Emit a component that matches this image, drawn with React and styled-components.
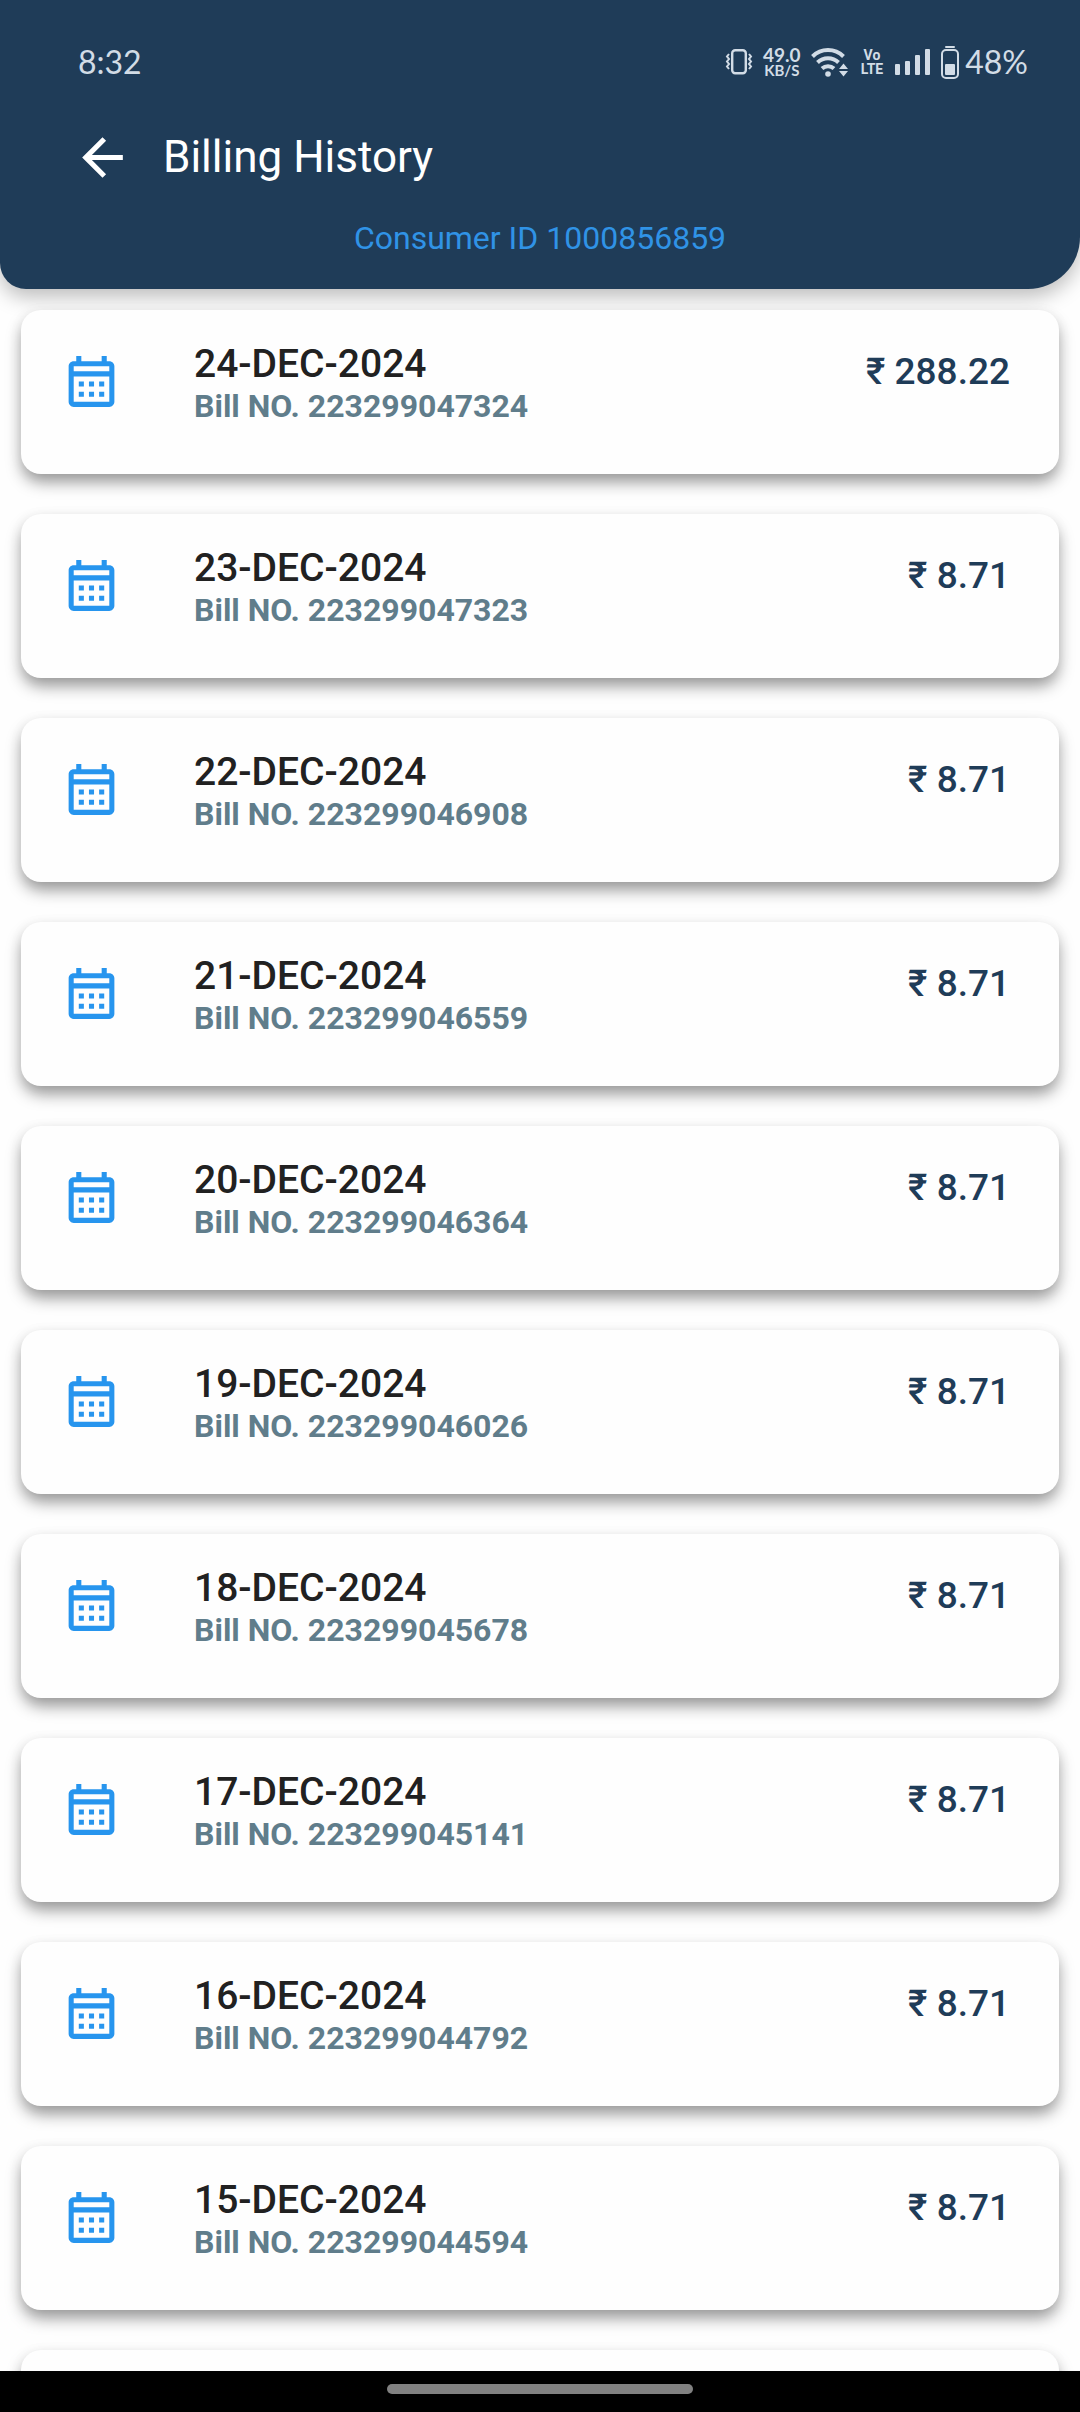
import React from "react";
import styled, { createGlobalStyle } from "styled-components";

const GlobalStyle = createGlobalStyle`
  * { box-sizing: border-box; }
  body { margin: 0; background: #fefefe; font-family: Roboto, "Noto Sans", sans-serif; }
`;

const Screen = styled.div`
  display: flex;
  flex-direction: column;
  height: 100vh;
  overflow: hidden;
`;

const Header = styled.header`
  flex: none;
  padding-bottom: 33px;
  background: #1f3c58;
  border-radius: 0 0 52px 26px;
  box-shadow: 0 8px 20px rgba(0, 0, 0, 0.26);
`;

const StatusBar = styled.div`
  display: flex;
  align-items: center;
  justify-content: space-between;
  height: 124px;
  padding: 0 52px 0 78px;
  color: #d2dce6;
  font-family: Lato, sans-serif;
  font-size: 32px;
  line-height: 40px;
`;

const StatusIcons = styled.div`
  display: flex;
  align-items: center;
`;

const Glyph = styled.svg`
  display: block;
  flex: none;
  margin-right: ${(p) => p.$gap}px;
`;

const Speed = styled.div`
  margin-right: 10px;
  font-size: 19px;
  font-weight: 700;
  line-height: 17px;
  text-align: center;
`;

const Unit = styled.div`
  font-size: 15px;
  line-height: 15px;
`;

const Volte = styled.div`
  margin-right: 12px;
  font-family: "Liberation Sans Narrow", Roboto, sans-serif;
  font-size: 14px;
  font-weight: 700;
  line-height: 14px;
  text-align: center;
`;

const TitleRow = styled.div`
  display: flex;
  align-items: center;
  height: 66px;
  padding-left: 72px;
`;

const BackButton = styled.button`
  display: flex;
  margin: 0 30px 0 0;
  padding: 0;
  border: 0;
  background: none;
  color: #fff;
`;

const Title = styled.h1`
  margin: 0;
  color: #fff;
  font-size: 44px;
  font-weight: 400;
  line-height: 52px;
`;

const Consumer = styled.p`
  margin: 30px 0 0;
  color: #3093e6;
  font-size: 32px;
  line-height: 36px;
  text-align: center;
`;

const BillList = styled.ul`
  display: flex;
  flex: 1;
  flex-direction: column;
  gap: 40px;
  min-height: 0;
  margin: 0;
  padding: 21px 21px 0;
  overflow: hidden;
  list-style: none;
`;

const Card = styled.li`
  display: flex;
  flex: none;
  align-items: flex-start;
  min-height: 164px;
  padding: 31px 49px 40px 40px;
  border-radius: 20px;
  background: #fefefe;
  box-shadow: 0 9px 16px -1px rgba(0, 0, 0, 0.4), 0 2px 16px rgba(0, 0, 0, 0.04);
`;

const CalendarIcon = styled.svg`
  flex: none;
  margin: 10px 72px 0 0;
  color: #2795ee;
`;

const Details = styled.div`
  flex: 1;
`;

const BillDate = styled.div`
  color: #212121;
  font-size: 39px;
  font-weight: 500;
  line-height: 46px;
`;

const BillNumber = styled.div`
  color: #607d8b;
  font-size: 32px;
  font-weight: 700;
  line-height: 38px;
`;

const Amount = styled.div`
  margin-top: 10px;
  color: #1f3c58;
  font-size: 37px;
  font-weight: 500;
  line-height: 42px;
`;

const NavBar = styled.div`
  display: flex;
  flex: none;
  justify-content: center;
  height: 41px;
  padding-top: 13px;
  background: #000;
  z-index: 1;
`;

const HomeHandle = styled.div`
  width: 306px;
  height: 10px;
  border-radius: 5px;
  background: #818181;
`;

const bills = [
  ["24-DEC-2024", "223299047324", "288.22"],
  ["23-DEC-2024", "223299047323", "8.71"],
  ["22-DEC-2024", "223299046908", "8.71"],
  ["21-DEC-2024", "223299046559", "8.71"],
  ["20-DEC-2024", "223299046364", "8.71"],
  ["19-DEC-2024", "223299046026", "8.71"],
  ["18-DEC-2024", "223299045678", "8.71"],
  ["17-DEC-2024", "223299045141", "8.71"],
  ["16-DEC-2024", "223299044792", "8.71"],
  ["15-DEC-2024", "223299044594", "8.71"],
];

function Calendar() {
  return (
    <CalendarIcon width="61" height="61" viewBox="0 0 24 24" fill="currentColor" aria-hidden="true">
      <path d="M19 4h-1V2h-2v2H8V2H6v2H5c-1.11 0-1.99.9-1.99 2L3 20c0 1.1.89 2 2 2h14c1.1 0 2-.9 2-2V6c0-1.1-.9-2-2-2zm0 16H5V10h14v10zm0-12H5V6h14v2zM9 14H7v-2h2v2zm4 0h-2v-2h2v2zm4 0h-2v-2h2v2zm-8 4H7v-2h2v2zm4 0h-2v-2h2v2zm4 0h-2v-2h2v2z" />
    </CalendarIcon>
  );
}

function Status() {
  return (
    <StatusBar>
      <span>8:32</span>
      <StatusIcons>
        <Glyph $gap={10} width="28" height="26" viewBox="0 0 28 26" fill="none" stroke="currentColor">
          <rect x="7.2" y="1.2" width="13.6" height="23" rx="3" strokeWidth="2.4" />
          <path d="M4 5l-2 2.500 2 2.500-2 2.500 2 2.500-2 2.500 2 2.500M24 5l2 2.500-2 2.500 2 2.500-2 2.500 2 2.500-2 2.500" strokeWidth="2" />
        </Glyph>
        <Speed>
          49.0
          <Unit>KB/S</Unit>
        </Speed>
        <Glyph $gap={12} width="38" height="30" viewBox="0 0 38 30" fill="none" stroke="currentColor">
          <path d="M1.500 9.500a22 22 0 0 1 31 0M6.500 15.500a15 15 0 0 1 21 0M11 21.500a9 9 0 0 1 12 0" strokeWidth="4" />
          <circle cx="17" cy="27" r="2.800" fill="currentColor" stroke="none" />
          <path d="M28 22l4.500-5.500 4.500 5.500zM28 24h9l-4.500 5.500z" fill="currentColor" stroke="none" />
        </Glyph>
        <Volte>
          Vo
          <div>LTE</div>
        </Volte>
        <Glyph $gap={10} width="36" height="26" viewBox="0 0 36 26" fill="currentColor">
          <rect x="0" y="15" width="5" height="11" rx="1" />
          <rect x="10" y="12" width="5" height="14" rx="1" />
          <rect x="20" y="6" width="5" height="20" rx="1" />
          <rect x="30" y="0" width="5" height="26" rx="1" />
        </Glyph>
        <Glyph $gap={6} width="18" height="33" viewBox="0 0 18 33" fill="currentColor">
          <rect x="4" y="0" width="10" height="2" rx="1" />
          <rect x="1" y="4" width="16" height="28" rx="4" fill="none" stroke="currentColor" strokeWidth="2" />
          <rect x="4" y="18" width="10" height="11" rx="1" />
        </Glyph>
        <span>48%</span>
      </StatusIcons>
    </StatusBar>
  );
}

export default function App() {
  return (
    <Screen>
      <GlobalStyle />
      <Header>
        <Status />
        <TitleRow>
          <BackButton type="button" aria-label="Back">
            <svg width="61" height="61" viewBox="0 0 24 24" fill="currentColor">
              <path d="M20 11H7.830l5.590-5.590L12 4l-8 8 8 8 1.410-1.410L7.830 13H20v-2z" />
            </svg>
          </BackButton>
          <Title>Billing History</Title>
        </TitleRow>
        <Consumer>Consumer ID 1000856859</Consumer>
      </Header>
      <BillList>
        {bills.map(([date, number, amount]) => (
          <Card key={number}>
            <Calendar />
            <Details>
              <BillDate>{date}</BillDate>
              <BillNumber>Bill NO. {number}</BillNumber>
            </Details>
            <Amount>₹ {amount}</Amount>
          </Card>
        ))}
        <Card />
      </BillList>
      <NavBar>
        <HomeHandle />
      </NavBar>
    </Screen>
  );
}
